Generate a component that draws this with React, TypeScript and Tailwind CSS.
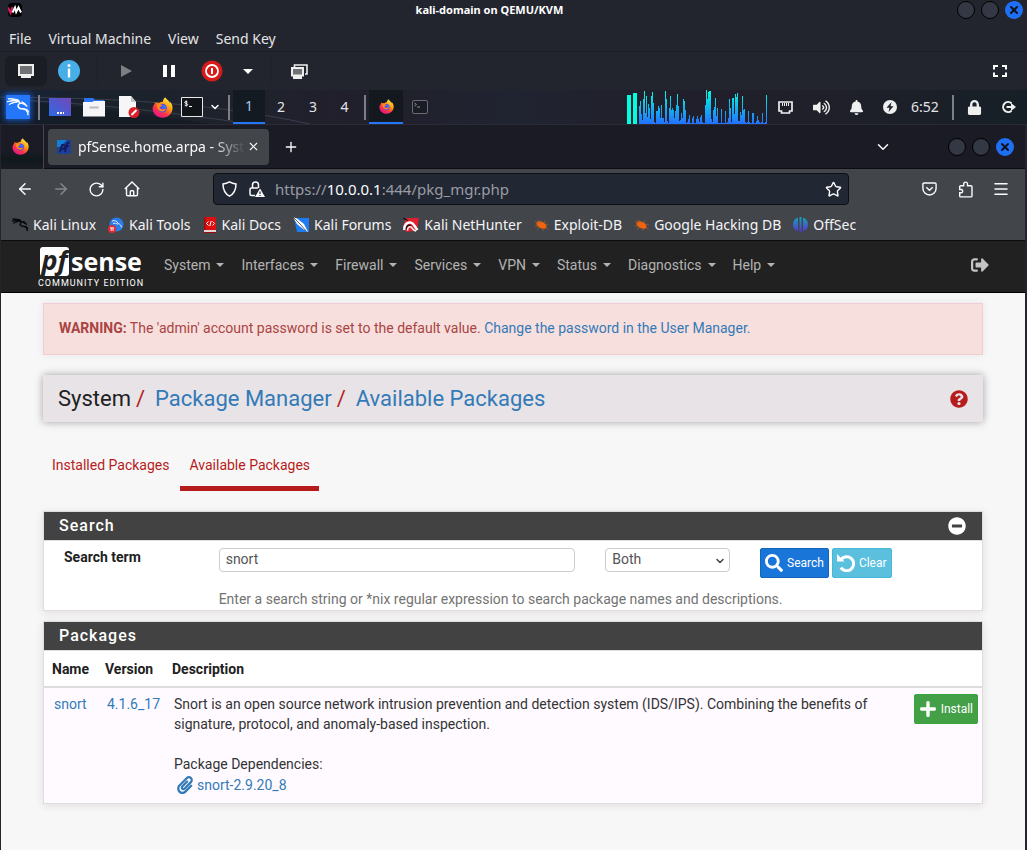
import type { ReactNode } from "react";
import {
  ArrowLeft,
  ArrowRight,
  ChevronDown,
  Menu,
  Plus,
  RotateCw,
  Star,
  X,
} from "lucide-react";
import {
  FaBell,
  FaLock,
  FaMinusCircle,
  FaPaperclip,
  FaPlus,
  FaQuestionCircle,
  FaSearch,
  FaSignOutAlt,
  FaVolumeUp,
} from "react-icons/fa";
import { SiKalilinux } from "react-icons/si";

const spectrum = [
  18, 23, 10, 4, 25, 33, 11, 28, 7, 20, 16, 5, 28, 32, 21, 2, 1, 13, 13, 18, 16,
  6, 19, 6, 6, 2, 33, 25, 3, 1, 16, 28, 14, 16, 14, 6, 13, 19, 30, 18, 3, 4, 11,
  6, 25, 23, 14, 1, 2, 5, 9, 1, 1, 6, 8, 1, 1, 5, 8, 5, 2, 7, 9, 2, 1, 1, 19, 34,
  25, 32, 33, 33, 5, 2, 14, 17, 26, 8, 16, 1, 1, 1, 15, 1, 1, 1, 13, 1, 2, 6, 25,
  16, 2, 26, 26, 10, 30, 27, 31, 3, 3, 12, 9, 28, 14, 15, 2, 1, 2, 13, 2, 1,
  1, 11, 11, 1, 1, 3, 8, 4, 2, 1, 2, 11, 1, 1, 2, 29,
];

function Firefox({ size, id }: { size: number; id: string }) {
  return (
    <svg width={size} height={size} viewBox="0 0 24 24" aria-hidden="true">
      <defs>
        <linearGradient id={id} x1="0.85" y1="0.05" x2="0.25" y2="0.95">
          <stop offset="0" stopColor="#fff44f" />
          <stop offset="0.4" stopColor="#ff980e" />
          <stop offset="0.7" stopColor="#ff3647" />
          <stop offset="1" stopColor="#e31587" />
        </linearGradient>
      </defs>
      <path
        d="M2.8 5.6c.1 1 .2 1.600.6 2C1.900 9 .7 11 .7 13.500 1 19.500 6 23.700 12 23.700S23.500 19 23.500 12.500c0-3-1.300-6-3.100-7.500.4 1 .5 1.700.5 2.300C19.500 4 16.500 2.800 15 .3c-1.500 1.200-2.400 3-2.500 5-1.700 0-3.200.6-4.200 1.500C7 6.500 6 6.500 5.600 6.700 4.200 6.500 3.300 5.900 2.800 5.600z"
        fill={`url(#${id})`}
      />
      <circle cx="12" cy="12.800" r="5" fill="#5b4be8" />
      <path
        d="M5.500 8.800c2-1.300 4.500-.6 6 .6-.1 1.300-2 1.400-2.800 2 .1 2.300 2.200 3.200 4.300 2.700 1.300-.3 2-1 3-.6-.8 2.500-3.500 3.700-6 2.800-3-1-4.800-4-4.500-7.500z"
        fill="#ff8a16"
      />
      <path d="M11.500 9.400c1 .8 1.300 2.300.2 2.700 1.500-.2 3 .2 4.500 1.400.7-2.300-1.300-4.500-4.700-4.100z" fill="#2f7dff" />
    </svg>
  );
}

function WindowButtons() {
  return (
    <div className="flex items-center gap-[6px]">
      <button aria-label="Minimize" className="size-[18px] rounded-full border border-black bg-[#343744]" />
      <button aria-label="Maximize" className="size-[18px] rounded-full border border-black bg-[#343744]" />
      <button aria-label="Close" className="flex size-[18px] items-center justify-center rounded-full bg-[#1f6ff5] text-[#10131c]">
        <X size={12} strokeWidth={4} />
      </button>
    </div>
  );
}

function TitleBar() {
  return (
    <header className="flex h-5 items-center justify-between bg-[#23252e] pl-[8px] pr-1">
      <span className="flex size-[14px] items-center justify-center rounded-sm bg-black">
        <svg width="14" height="14" viewBox="0 0 14 14" aria-hidden="true">
          <path d="M0 4.500 2.500 10 4.500 4" fill="none" stroke="#d81b60" strokeWidth="2" />
          <path d="M4.500 9.500 7 4.500l1.200 4.500 2.300-4.500L13 9.500" fill="none" stroke="#fff" strokeWidth="2" />
        </svg>
      </span>
      <h1 className="text-[11px] font-bold text-white">kali-domain on QEMU/KVM</h1>
      <WindowButtons />
    </header>
  );
}

function MenuBar() {
  return (
    <nav className="flex h-8 items-center gap-[17px] border-b border-[#1c1e26] bg-[#23252e] px-[9px] pt-[6px] text-sm text-[#e4e4e6]">
      <button>File</button>
      <button>Virtual Machine</button>
      <button>View</button>
      <button>Send Key</button>
    </nav>
  );
}

function Toolbar() {
  return (
    <div className="flex h-[38px] items-center bg-[#23252e] pl-[5px] pr-5">
      <button aria-label="Console" className="flex h-[30px] w-[42px] items-center justify-center rounded-md bg-[#1b1d24]">
        <svg width="18" height="16" viewBox="0 0 18 16" aria-hidden="true">
          <path d="M1 1h16v12h-3v2H4v-2H1z" fill="#eeeeec" />
          <path d="M3 3h12v8H3z" fill="#6f7175" />
        </svg>
      </button>
      <button aria-label="Details" className="ml-[11px]">
        <svg width="22" height="22" viewBox="0 0 22 22" aria-hidden="true">
          <circle cx="11" cy="11" r="11" fill="#47aee8" />
          <circle cx="11" cy="5.500" r="1.500" fill="#fff" />
          <path d="M9.800 8.500h2.400v9H9.800z" fill="#fff" />
        </svg>
      </button>
      <span className="ml-[17px] h-[30px] w-px bg-[#1e2028]" />
      <button aria-label="Run" className="ml-[22px]">
        <svg width="12" height="12" viewBox="0 0 12 12" aria-hidden="true">
          <path d="M1 0l11 6-11 6z" fill="#7d7f83" />
        </svg>
      </button>
      <button aria-label="Pause" className="ml-[31px]">
        <svg width="12" height="12" viewBox="0 0 12 12" aria-hidden="true">
          <path d="M0 0h4v12H0zM8 0h4v12H8z" fill="#fff" />
        </svg>
      </button>
      <button aria-label="Shut down" className="ml-[26px]">
        <svg width="22" height="22" viewBox="0 0 22 22" aria-hidden="true">
          <circle cx="11" cy="11" r="10.500" fill="#d81a1a" />
          <circle cx="11" cy="11" r="6" fill="none" stroke="#fff" strokeWidth="1.800" />
          <path d="M10 8h2v6h-2z" fill="#fff" />
        </svg>
      </button>
      <button aria-label="Shut down options" className="ml-5">
        <svg width="10" height="5" viewBox="0 0 10 5" aria-hidden="true">
          <path d="M0 0h10L5 5z" fill="#fff" />
        </svg>
      </button>
      <span className="ml-[17px] h-[30px] w-px bg-[#1e2028]" />
      <button aria-label="Snapshots" className="ml-5">
        <svg width="17" height="15" viewBox="0 0 17 15" aria-hidden="true">
          <path d="M3.500 3V1h12.500v9h-2" fill="none" stroke="#eeeeec" strokeWidth="1.600" />
          <path d="M0 3h13v9.500h-2V15H2v-2.500H0z" fill="#eeeeec" />
          <path d="M2 5h9v5.500H2z" fill="#6f7175" />
        </svg>
      </button>
      <button aria-label="Full screen" className="ml-auto">
        <svg width="14" height="12" viewBox="0 0 14 12" aria-hidden="true">
          <path d="M1 4.500V1h4M9 1h4v3.500M13 7.500V11H9M5 11H1V7.500" fill="none" stroke="#fff" strokeWidth="2" />
        </svg>
      </button>
    </div>
  );
}

function PanelDivider() {
  return <span className="h-[25px] w-[2px] bg-[#7d7f88]" />;
}

function TerminalIcon() {
  return (
    <svg width="22" height="20" viewBox="0 0 22 20" aria-hidden="true">
      <path d="M.5.5h21v19H.5z" fill="#11151a" stroke="#e8e8e8" />
      <path d="M6.500 5C5 4 3.500 4.500 3.700 5.500s3 .8 3 2-1.700 1.500-3 .6M5.200 3.500v6M8 9.500h3" fill="none" stroke="#fff" />
    </svg>
  );
}

function KaliPanel() {
  return (
    <div className="relative flex h-[35px] items-center justify-between border-b border-[#2b2c33] bg-[linear-gradient(90deg,#16243a_0%,#1a222c_8%,#1f222c_25%,#211f2c_34%,#202430_50%,#211f2c_65%,#1f2029_82%,#161f27_100%)]">
      <svg className="absolute left-0 top-0 h-[34px] w-[340px]" viewBox="0 0 340 34" aria-hidden="true">
        <path d="M0 7C90 8 200 10 310 34M0 9c80 4 150 10 250 25" fill="none" stroke="#4b5260" strokeOpacity=".6" />
        <path d="M0 8c60 8 140 14 210 26H0z" fill="#10161d" fillOpacity=".45" />
      </svg>
      <div className="relative flex items-center">
        <button aria-label="Applications" className="ml-[6px] flex size-6 items-center justify-center bg-[#2477fb] text-white shadow-[0_0_6px_1px_#1c5fd0]">
          <SiKalilinux size={22} stroke="currentColor" strokeWidth={1} />
        </button>
        <span className="ml-2 flex">
          <PanelDivider />
        </span>
        <button aria-label="Show desktop" className="ml-[9px]">
          <svg width="22" height="18" viewBox="0 0 22 18" aria-hidden="true">
            <defs>
              <linearGradient id="desk" x1="0" y1="1" x2="1" y2="0">
                <stop offset="0" stopColor="#2d6be6" />
                <stop offset="1" stopColor="#7447b8" />
              </linearGradient>
            </defs>
            <path d="M0 0h22v18H0z" fill="url(#desk)" />
            <path d="M8 14h2v2H8zM11 14h2v2h-2zM14 14h1v2h-1z" fill="#fff" />
          </svg>
        </button>
        <button aria-label="File manager" className="ml-3">
          <svg width="22" height="20" viewBox="0 0 22 20" aria-hidden="true">
            <path d="M1 1h9l2 2h9v6H1z" fill="#2d73f0" />
            <path d="M0 5h9l2-1h11v15.500H0z" fill="#f5f5f7" />
            <path d="M6.500 9.500h9v2h-9z" fill="#b9bac0" />
          </svg>
        </button>
        <button aria-label="Text editor" className="ml-[14px]">
          <svg width="21" height="22" viewBox="0 0 21 22" aria-hidden="true">
            <path d="M0 0h12l5 6v15H0z" fill="#f6f6f6" />
            <path d="M12 0v6h5z" fill="#c3c4c8" />
            <circle cx="15" cy="16.500" r="5.500" fill="#d9202a" />
            <path d="m12.500 19 5-5" stroke="#fff" strokeWidth="2" />
          </svg>
        </button>
        <button aria-label="Firefox" className="ml-3">
          <Firefox size={21} id="fx-launch" />
        </button>
        <button aria-label="Terminal" className="ml-2">
          <TerminalIcon />
        </button>
        <button aria-label="More terminals" className="ml-[6px] text-white">
          <ChevronDown size={12} strokeWidth={3} />
        </button>
        <span className="ml-[7px] flex">
          <PanelDivider />
        </span>
        <div className="ml-[3px] flex text-sm text-[#e4e4e8]">
          <button className="h-[34px] w-8 border-b-2 border-[#2477fb] bg-[#141a22] text-[#a9c4ee]">1</button>
          <button className="h-[34px] w-8">2</button>
          <button className="h-[34px] w-8">3</button>
          <button className="h-[34px] w-[31px]">4</button>
        </div>
        <span className="ml-1 flex">
          <PanelDivider />
        </span>
        <button aria-label="Firefox window" className="ml-[3px] flex h-[34px] w-[34px] items-center justify-center border-b-2 border-[#2477fb] bg-[#14191f]">
          <Firefox size={15} id="fx-task" />
        </button>
        <button aria-label="Terminal window" className="ml-[9px] opacity-50">
          <svg width="16" height="14" viewBox="0 0 16 14" aria-hidden="true">
            <rect x=".5" y=".5" width="15" height="13" rx="1.500" fill="#15181d" stroke="#b4b4b4" />
            <path d="M2.500 3l2 1.500-2 1.500M5 7h3" fill="none" stroke="#fff" />
          </svg>
        </button>
      </div>
      <div className="flex items-center text-[#efefef]">
        <svg width="141" height="34" viewBox="0 0 141 34" role="img" aria-label="Audio activity">
          <defs>
            <linearGradient id="spec" gradientUnits="userSpaceOnUse" x1="0" y1="0" x2="0" y2="34">
              <stop offset="0" stopColor="#00ffe0" />
              <stop offset="1" stopColor="#2470ff" />
            </linearGradient>
          </defs>
          <path d="M0 5h4v29H0zM6 3h4v31H6z" fill="#00ffe0" />
          {spectrum.map((h, i) => (
            <rect key={i} x={12 + i} y={34 - h} width="1" height={h} fill="url(#spec)" />
          ))}
        </svg>
        <svg className="ml-[10px]" width="15" height="13" viewBox="0 0 15 13" aria-label="Network" role="img">
          <path d="M1 1h13v9h-2.500v2h-8v-2H1z" fill="none" stroke="currentColor" strokeWidth="1.700" />
          <path d="M4.500 2v3M6.500 2v3M8.500 2v3M10.500 2v3" stroke="currentColor" />
        </svg>
        <FaVolumeUp className="ml-5" size={17} aria-label="Volume" />
        <FaBell className="ml-[19px]" size={15} aria-label="Notifications" />
        <svg className="ml-[19px]" width="14" height="14" viewBox="0 0 14 14" aria-label="Power" role="img">
          <circle cx="7" cy="7" r="7" fill="currentColor" />
          <path d="M8.500 2 3.500 7.800h3L5.500 12l5-5.800h-3z" fill="#1d2029" />
        </svg>
        <time className="ml-[14px] w-[30px] text-sm text-[#e4e4e8]">6:52</time>
        <span className="ml-[11px] flex">
          <PanelDivider />
        </span>
        <FaLock className="ml-[13px]" size={15} aria-label="Lock screen" />
        <svg className="ml-[19px] mr-[11px]" width="15" height="14" viewBox="0 0 15 14" aria-label="Log out" role="img">
          <path d="M10.500 3.300A5 5 0 1 0 10.500 10.700" fill="none" stroke="currentColor" strokeWidth="2" />
          <path d="M5.500 6H10V3l5 4-5 4V8H5.500z" fill="currentColor" />
        </svg>
      </div>
    </div>
  );
}

function TabStrip() {
  return (
    <div className="flex h-11 items-center border-b border-[#0c0c0e] bg-[#1a1b24]">
      <button aria-label="Firefox View" className="flex h-11 w-[43px] items-center justify-center border-r border-[#45464d] bg-[linear-gradient(#1a1b24_60%,#10191b_78%,#1a1b24)] pr-[3px]">
        <Firefox size={17} id="fx-view" />
      </button>
      <div className="ml-1 flex h-9 w-[221px] items-center rounded bg-[#42454a] pl-[9px] pr-[9px]">
        <svg width="14" height="14" viewBox="0 0 14 14" aria-hidden="true">
          <path d="M0 0h14v14H0z" fill="#1c3f9a" />
          <path d="M0 0h10L3 7H0z" fill="#0f7fd8" />
          <path d="M3 12 5 5c5-1 4 4 0 4M8 12l2-8c.5-1.500 1.500-1.500 2.500-1.500M8.500 6H12" fill="none" stroke="#171a5c" strokeWidth="1.800" />
        </svg>
        <span className="ml-[7px] flex-1 whitespace-nowrap text-sm text-[#fbfbfe] [mask-image:linear-gradient(90deg,#000_80%,transparent)]">
          pfSense.home.arpa - Syst
        </span>
        <button aria-label="Close tab" className="ml-[2px] text-[#fbfbfe]">
          <X size={13} strokeWidth={2} />
        </button>
      </div>
      <button aria-label="New tab" className="ml-[14px] text-[#fbfbfe]">
        <Plus size={16} strokeWidth={2} />
      </button>
      <button aria-label="List all tabs" className="ml-auto mr-14 text-[#fbfbfe]">
        <ChevronDown size={18} strokeWidth={2} />
      </button>
      <div className="mr-[11px]">
        <WindowButtons />
      </div>
    </div>
  );
}

function NavBar() {
  return (
    <div className="flex h-10 items-center bg-[#42454a] px-[15px] text-[#fbfbfe]">
      <button aria-label="Back" className="w-9">
        <ArrowLeft size={18} strokeWidth={2} />
      </button>
      <button aria-label="Forward" className="w-9 text-[#85878b]">
        <ArrowRight size={18} strokeWidth={2} />
      </button>
      <button aria-label="Reload" className="w-9">
        <RotateCw size={17} strokeWidth={2} />
      </button>
      <button aria-label="Home">
        <svg width="16" height="16" viewBox="0 0 16 16" fill="none" stroke="currentColor" strokeWidth="1.400" aria-hidden="true">
          <path d="M.8 8 8 1l7.200 7M2.500 7v6.500c0 .8.500 1.300 1.300 1.300h8.400c.8 0 1.300-.5 1.300-1.300V7M6.300 14.500V10.500c0-.5.3-.8.8-.8h1.800c.5 0 .8.3.8.8v4" />
        </svg>
      </button>
      <div className="ml-[73px] flex h-8 flex-1 items-center rounded border border-[#0e0f13] bg-[#222833] pl-2 pr-[6px]">
        <svg width="15" height="16" viewBox="0 0 15 16" fill="none" stroke="currentColor" strokeWidth="1.500" aria-label="Tracking protection" role="img">
          <path d="M7.500.8C9.500 2 11.500 2.700 14 3c0 5.500-1.500 9.500-6.500 12.200C2.500 12.500 1 8.500 1 3 3.500 2.700 5.500 2 7.500.8z" />
        </svg>
        <svg className="ml-3" width="16" height="16" viewBox="0 0 16 16" fill="none" aria-label="Connection not secure" role="img">
          <path d="M3.500 7V4a3 3 0 0 1 6 0v3M6 14.500H2.500c-.8 0-1.500-.5-1.500-1.500V8.500c0-.8.700-1.500 1.500-1.500H9" stroke="currentColor" strokeWidth="1.500" />
          <path d="M11 7.500 16 16H6z" fill="currentColor" />
          <path d="M11 10.500v2.500M11 14v1" stroke="#222833" strokeWidth="1.200" />
        </svg>
        <span className="ml-[10px] flex-1 text-[15px] text-[#9a9ba5]">
          https://<span className="text-[#fbfbfe]">10.0.0.1</span>:444/pkg_mgr.php
        </span>
        <button aria-label="Bookmark this page">
          <Star size={17} strokeWidth={2} />
        </button>
      </div>
      <button aria-label="Save to Pocket" className="ml-[73px]">
        <svg width="15" height="14" viewBox="0 0 15 14" fill="none" stroke="currentColor" strokeWidth="1.400" aria-hidden="true">
          <path d="M2.200 1h10.600c.8 0 1.300.5 1.300 1.200v4c0 4-3 6.800-6.600 6.800S.9 10.200.9 6.200v-4C.9 1.500 1.400 1 2.200 1z" />
          <path d="m4.300 5.200 3.200 3 3.200-3" />
        </svg>
      </button>
      <button aria-label="Extensions" className="ml-[21px]">
        <svg width="16" height="17" viewBox="0 0 16 17" fill="none" stroke="currentColor" strokeWidth="1.400" aria-hidden="true">
          <path d="M1.700 8.500V5.700c0-.7.500-1 1-1h3V3a1.900 1.900 0 0 1 3.800 0v1.700h3.300c.7 0 1.200.4 1.200 1v9c0 .7-.5 1.200-1.200 1.200H2.700c-.7 0-1-.5-1-1.200v-2.900h1.700a1.700 1.700 0 0 0 0-3.300z" />
        </svg>
      </button>
      <button aria-label="Application menu" className="ml-[18px]">
        <Menu size={18} strokeWidth={2} />
      </button>
    </div>
  );
}

function SpiderIcon() {
  return (
    <svg width="15" height="14" viewBox="0 0 15 14" aria-hidden="true">
      <ellipse cx="7.500" cy="7" rx="5.500" ry="3.200" transform="rotate(28 7.500 7)" fill="#f0640f" />
      <path d="M1 3.500 5 5M4 1.500l2.500 3M1 8h4M3 11.500 6 9M10 5l1-2.500M12 6l2.500.5M9 10v3M12 9.500l2.500 2" stroke="#a85a2a" strokeWidth=".8" />
    </svg>
  );
}

const bookmarks: { label: string; icon: ReactNode }[] = [
  {
    label: "Kali Linux",
    icon: <SiKalilinux size={16} stroke="currentColor" strokeWidth={1.5} className="text-[#08080a]" />,
  },
  {
    label: "Kali Tools",
    icon: (
      <svg width="16" height="16" viewBox="0 0 16 16" aria-hidden="true">
        <circle cx="8.500" cy="7.500" r="7" fill="#2a7de9" />
        <path d="M4 4c3-.8 5.500 0 6 2.500 1.500.2 3 1.500 3.500 4M5 6.500c2-.5 3.500 0 5 .8" fill="none" stroke="#dbe9ff" />
        <circle cx="4" cy="12" r="4" fill="#e02a35" />
        <path d="M2 10.800h4M3.200 11v3M5 11v3" stroke="#fff" strokeWidth=".9" />
      </svg>
    ),
  },
  {
    label: "Kali Docs",
    icon: (
      <svg width="14" height="16" viewBox="0 0 14 16" aria-hidden="true">
        <path d="M1 0h12v13H1z" fill="#dd1010" />
        <path d="M1 13h12v2H1z" fill="#e3d6d6" />
        <path d="M1 0h1.500v13H1zM1 15h12v1H1z" fill="#9c0b0b" />
        <path d="m5.500 4.500-2 2 2 2M9.500 4.500l2 2-2 2M8.200 4 6.800 9" fill="none" stroke="#fff" />
      </svg>
    ),
  },
  {
    label: "Kali Forums",
    icon: (
      <svg width="16" height="16" viewBox="0 0 16 16" aria-hidden="true">
        <path d="M1 1h15v14H4z" fill="#1f7bf2" />
        <path d="M0 0 4 1.500l7 5.500 4 8-5-3-6-5z" fill="#fff" />
        <path d="m0 0 8 8 5 6" fill="none" stroke="#1b1f26" strokeWidth=".7" />
      </svg>
    ),
  },
  {
    label: "Kali NetHunter",
    icon: (
      <svg width="16" height="14" viewBox="0 0 16 14" aria-hidden="true">
        <path d="M3 0h13l-2 12.500L3 14 0 9z" fill="#e2202f" />
        <path d="M1.500 12C1 7 4 4 7.500 4.500S11 8 14.500 12" fill="none" stroke="#fff" strokeWidth="2.600" />
        <path d="M4.500 12.500c0-3 2-4.500 3.500-3.500s1.500 3.500 5 4" fill="none" stroke="#fff" strokeWidth="1.500" />
        <path d="M0 0l2 1 3 1.500M3 11.500C3 8.500 5 6.500 8 7.500" fill="none" stroke="#111" strokeWidth="1.200" />
      </svg>
    ),
  },
  { label: "Exploit-DB", icon: <SpiderIcon /> },
  { label: "Google Hacking DB", icon: <SpiderIcon /> },
  {
    label: "OffSec",
    icon: (
      <svg width="15" height="16" viewBox="0 0 15 16" aria-hidden="true">
        <defs>
          <linearGradient id="offsec" x1="0" y1="0" x2="0" y2="1">
            <stop offset="0" stopColor="#16a5b8" />
            <stop offset="1" stopColor="#5a2bd0" />
          </linearGradient>
        </defs>
        <path d="M5 .8v13.400C2 13.500 0 11 0 7.500S2 1.500 5 .8zM10 .8v13.400c3-.7 5-3.200 5-6.700S13 1.500 10 .8zM6.500 0h2v16l-1-1-1 1z" fill="url(#offsec)" />
      </svg>
    ),
  },
];

function BookmarksBar() {
  return (
    <nav className="flex h-8 items-center gap-3 border-b border-[#0c0c0e] bg-[#42454a] px-[11px] text-sm text-[#f4f4f7]">
      {bookmarks.map((b) => (
        <a key={b.label} href="#" className="flex items-center gap-[5px] whitespace-nowrap">
          {b.icon}
          {b.label}
        </a>
      ))}
    </nav>
  );
}

const pfMenu = ["System", "Interfaces", "Firewall", "Services", "VPN", "Status", "Diagnostics", "Help"];

function PfNav() {
  return (
    <nav className="flex h-[52px] items-center border-b border-black bg-[#212121] pl-[37px] pr-9 pb-[3px] text-sm text-[#b3b3b3]">
      <a href="#" aria-label="pfSense Community Edition" className="flex w-[108px] flex-col pt-[5px] text-white">
        <span className="flex items-center pl-[2px] font-['Open_Sans',sans-serif] font-bold">
          <span className="flex h-[29px] w-[29px] items-center justify-center rounded-[3px] bg-white pb-[3px] text-[27px] leading-[20px] text-[#212121] italic">
            pf
          </span>
          <span className="ml-[2px] text-[25px] leading-[29px]">sense</span>
        </span>
        <span className="mt-[2px] text-[9px] leading-[10px] tracking-[1px] whitespace-nowrap">
          COMMUNITY EDITION
        </span>
      </a>
      <ul className="ml-[18px] flex gap-[17px]">
        {pfMenu.map((item) => (
          <li key={item}>
            <button className="flex items-center gap-[6px]">
              {item}
              <svg width="8" height="4" viewBox="0 0 8 4" aria-hidden="true">
                <path d="M0 0h8L4 4z" fill="currentColor" />
              </svg>
            </button>
          </li>
        ))}
      </ul>
      <button aria-label="Log out" className="ml-auto text-[#c4c4c4]">
        <FaSignOutAlt size={18} />
      </button>
    </nav>
  );
}

function Panel({ title, action, children }: { title: string; action?: ReactNode; children: ReactNode }) {
  return (
    <section className="border border-[#dddddd] bg-white shadow-[0_2px_8px_rgba(80,40,60,0.12)]">
      <div className="flex h-[29px] items-center justify-between border-b border-[#dddddd] bg-[#424242] pl-[15px] pr-4 text-white">
        <h2 className="text-base leading-5 font-medium tracking-[1px]">{title}</h2>
        {action}
      </div>
      {children}
    </section>
  );
}

function UndoIcon() {
  return (
    <svg width="18" height="18" viewBox="0 0 18 18" aria-hidden="true">
      <path d="M4 5.500A7 7 0 1 1 3.800 13.600" fill="none" stroke="currentColor" strokeWidth="3" />
      <path d="M0 0l2.300 2.300L7.500 7.500H0z" fill="currentColor" />
    </svg>
  );
}

function SearchPanel() {
  return (
    <Panel
      title="Search"
      action={
        <button aria-label="Collapse search">
          <FaMinusCircle size={18} />
        </button>
      }
    >
      <form className="mx-[5px] grid grid-cols-12 pt-[7px] pb-px" onSubmit={(e) => e.preventDefault()}>
        <label htmlFor="term" className="col-span-2 px-[15px] text-sm leading-[18px] font-bold">
          Search term
        </label>
        <div className="col-span-5 px-[15px]">
          <input
            id="term"
            defaultValue="snort"
            className="block h-6 w-full rounded border border-[#cccccc] bg-white px-[6px] pb-[2px] text-sm text-[#555555]"
          />
        </div>
        <div className="relative col-span-2 px-[15px]">
          <select
            aria-label="Search in"
            className="block h-6 w-full appearance-none rounded border border-[#cccccc] bg-white px-[6px] pb-[2px] text-sm text-[#555555]"
          >
            <option>Both</option>
          </select>
          <ChevronDown size={12} strokeWidth={3} className="pointer-events-none absolute right-[19px] top-[7px] text-[#444444]" />
        </div>
        <div className="col-span-3 flex gap-[3px] px-[15px] text-xs text-white">
          <button className="flex h-[30px] items-center gap-1 rounded-[2px] border border-[#1565b8] bg-[#1976d8] px-1">
            <FaSearch size={18} />
            Search
          </button>
          <button className="flex h-[30px] items-center gap-1 rounded-[2px] border border-[#46b8da] bg-[#5bc0de] px-1">
            <UndoIcon />
            Clear
          </button>
        </div>
        <p className="col-span-10 col-start-3 mt-[11px] px-[15px] text-sm text-[#737373]">
          Enter a search string or *nix regular expression to search package names and descriptions.
        </p>
      </form>
    </Panel>
  );
}

function PackagesPanel() {
  return (
    <Panel title="Packages">
      <table className="w-full text-left text-sm">
        <thead>
          <tr className="h-[36px] border-b-2 border-[#dddddd]">
            <th className="w-[53px] pl-2 font-bold">Name</th>
            <th className="w-[67px] pl-2 font-bold">Version</th>
            <th className="pl-2 font-bold">Description</th>
            <th aria-label="Actions" />
          </tr>
        </thead>
        <tbody>
          <tr className="bg-[#fefaff] align-top text-[#333333]">
            <td className="pt-[6px] pl-[10px]">
              <a href="#" className="text-[#337ab7]">snort</a>
            </td>
            <td className="pt-[6px] pl-[10px]">
              <a href="#" className="text-[#337ab7]">4.1.6_17</a>
            </td>
            <td className="pt-[6px] pb-[7px] pl-[10px]">
              <p>
                Snort is an open source network intrusion prevention and detection system (IDS/IPS). Combining the
                benefits of signature, protocol, and anomaly-based inspection.
              </p>
              <p className="mt-5">Package Dependencies:</p>
              <a href="#" className="ml-[2px] flex h-[22px] items-center gap-[3px] text-[#337ab7]">
                <FaPaperclip size={18} />
                snort-2.9.20_8
              </a>
            </td>
            <td className="w-[108px] pt-[6px] pr-1">
              <button className="ml-auto flex h-[30px] items-center gap-1 rounded-[2px] border border-[#39a33d] bg-[#43a047] px-1 text-xs text-white">
                <FaPlus size={18} />
                Install
              </button>
            </td>
          </tr>
        </tbody>
      </table>
    </Panel>
  );
}

function PfPage() {
  return (
    <main className="flex-1 bg-[#f7f7f7] px-[42px] pt-[10px] pb-10 text-[#212121]">
      <div role="alert" className="h-[52px] border border-[#efcdd2] bg-[#f7dfde] px-[15px] py-[14px] text-sm text-[#a94442] shadow-[0_0_8px_rgba(80,40,60,0.08)]">
        <strong>WARNING:</strong> The 'admin' account password is set to the default value.{" "}
        <a href="#" className="text-[#337ab7]">Change the password in the User Manager.</a>
      </div>
      <header className="mt-5 flex h-[47px] items-center justify-between bg-[#e8e3e7] pl-[15px] pr-[15px] shadow-[0_0_8px_rgba(0,0,0,0.35)]">
        <ol className="flex text-[22px]">
          <li>System</li>
          <li className="flex">
            <span className="ml-[5px] mr-[10px] text-[#b71c1c]">/</span>
            <a href="#" className="text-[#337ab7]">Package Manager</a>
          </li>
          <li className="flex">
            <span className="ml-[5px] mr-[10px] text-[#b71c1c]">/</span>
            <a href="#" className="text-[#337ab7]">Available Packages</a>
          </li>
        </ol>
        <button aria-label="Help" className="text-[#b71c1c]">
          <FaQuestionCircle size={18} />
        </button>
      </header>
      <nav className="mt-[33px] flex gap-[2px] text-sm text-[#b71c1c]">
        <a href="#" className="border-b-[5px] border-transparent px-[9px] pb-[11px]">Installed Packages</a>
        <a href="#" aria-current="page" className="border-b-[5px] border-[#b71c1c] px-[9px] pb-[11px]">Available Packages</a>
      </nav>
      <div className="mt-5 flex flex-col gap-[10px]">
        <SearchPanel />
        <PackagesPanel />
      </div>
    </main>
  );
}

export default function App() {
  return (
    <div className="flex min-h-screen flex-col bg-[#23252e] font-['Noto_Sans',sans-serif]">
      <TitleBar />
      <MenuBar />
      <Toolbar />
      <KaliPanel />
      <div className="flex flex-1 flex-col border-r-2 border-l border-[#23252e]">
        <TabStrip />
        <NavBar />
        <BookmarksBar />
        <div className="flex flex-1 flex-col font-[Roboto,sans-serif]">
          <PfNav />
          <PfPage />
        </div>
      </div>
    </div>
  );
}
